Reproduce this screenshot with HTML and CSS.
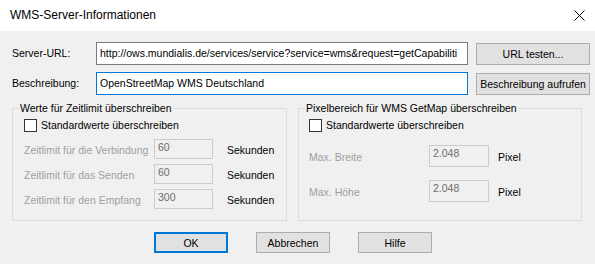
FILE: index.html
```html
<!DOCTYPE html>
<html lang="de">
<head>
  <meta charset="UTF-8" />
  <title>WMS-Server-Informationen</title>
  <link rel="stylesheet" href="styles.css">
</head>
<body>
  <div class="dialog">
    <div class="titlebar">
      <span class="title">WMS-Server-Informationen</span>
      <svg class="close" width="11" height="11" viewBox="0 0 11 11">
        <path d="M0.5 0.5 L10.5 10.5 M10.5 0.5 L0.5 10.5" stroke="#000" stroke-width="1" fill="none"/>
      </svg>
    </div>

    <div class="content">
      <div class="field-row">
        <span class="field-label">Server-URL:</span>
        <div class="textbox">http://ows.mundialis.de/services/service?service=wms&amp;request=getCapabiliti</div>
        <button class="btn btn-side">URL testen...</button>
      </div>
      <div class="field-row">
        <span class="field-label">Beschreibung:</span>
        <div class="textbox focused">OpenStreetMap WMS Deutschland</div>
        <button class="btn btn-side">Beschreibung aufrufen</button>
      </div>

      <div class="groups">
        <fieldset class="group group-time">
          <legend>Werte für Zeitlimit überschreiben</legend>
          <label class="check"><span class="box"></span>Standardwerte überschreiben</label>
          <div class="limit-grid">
            <span class="dim">Zeitlimit für die Verbindung</span>
            <span class="num">60</span>
            <span class="unit">Sekunden</span>

            <span class="dim">Zeitlimit für das Senden</span>
            <span class="num">60</span>
            <span class="unit">Sekunden</span>

            <span class="dim">Zeitlimit für den Empfang</span>
            <span class="num">300</span>
            <span class="unit">Sekunden</span>
          </div>
        </fieldset>

        <fieldset class="group group-pixel">
          <legend>Pixelbereich für WMS GetMap überschreiben</legend>
          <label class="check"><span class="box"></span>Standardwerte überschreiben</label>
          <div class="pixel-grid">
            <span class="dim">Max. Breite</span>
            <span class="num">2.048</span>
            <span class="unit">Pixel</span>

            <span class="dim">Max. Höhe</span>
            <span class="num">2.048</span>
            <span class="unit">Pixel</span>
          </div>
        </fieldset>
      </div>

      <div class="actions">
        <button class="btn btn-action default">OK</button>
        <button class="btn btn-action">Abbrechen</button>
        <button class="btn btn-action">Hilfe</button>
      </div>
    </div>
  </div>
</body>
</html>
```

FILE: styles.css
```css
* {
  box-sizing: border-box;
}

body {
  margin: 0;
  font-family: "Liberation Sans", Arial, sans-serif;
  font-size: 10.5px;
  color: #000;
  background: #f0f0f0;
}

.dialog {
  width: 595px;
  height: 264px;
  background: #f0f0f0;
  overflow: hidden;
}

.titlebar {
  height: 31px;
  background: #fff;
  display: flex;
  align-items: center;
  justify-content: space-between;
  padding: 0 10px 0 10px;
}

.title {
  font-size: 12px;
  padding-bottom: 1px;
}

.close {
  display: block;
  margin-bottom: 1px;
}

.content {
  padding: 11px 0 0 12px;
}

/* top rows */
.field-row {
  display: flex;
  align-items: flex-start;
  height: 23px;
  margin-bottom: 7px;
}

.field-label {
  width: 84px;
  line-height: 21px;
  padding-top: 1px;
}

.textbox {
  width: 372px;
  height: 23px;
  border: 1px solid #7a7a7a;
  background: #fff;
  padding: 0 3px;
  line-height: 21px;
  white-space: nowrap;
  overflow: hidden;
}

.textbox.focused {
  border-color: #0078d7;
}

.btn {
  font-family: inherit;
  font-size: 10.5px;
  color: #000;
  background: #e1e1e1;
  border: 1px solid #adadad;
  padding: 0;
  white-space: nowrap;
}

.btn-side {
  width: 114px;
  height: 22px;
  margin: 1px 0 0 8px;
}

/* group boxes */
.groups {
  display: flex;
  gap: 11px;
  margin-top: 2px;
}

.group {
  margin: 0;
  padding: 0 0 0 6px;
  border: 1px solid #dcdcdc;
  height: 119px;
  min-width: 0;
}

.group-time {
  width: 275px;
}

.group-pixel {
  width: 284px;
}

.group legend {
  padding: 0 1px;
  line-height: 13px;
}

.check {
  display: flex;
  align-items: center;
  margin: 4px 0 0 5px;
  line-height: 13px;
}

.group-pixel .check {
  margin-left: 4px;
}

.box {
  width: 13px;
  height: 13px;
  border: 1px solid #333;
  background: #fff;
  margin-right: 4px;
}

.dim {
  color: #a0a0a0;
  white-space: nowrap;
}

.num {
  border: 1px solid #cccccc;
  background: #f0f0f0;
  color: #6d6d6d;
  padding: 1px 3px 0;
  line-height: 13px;
}

.limit-grid {
  display: grid;
  grid-template-columns: 130px 59px auto;
  grid-auto-rows: 20px;
  row-gap: 5px;
  margin: 7px 0 0 5px;
}

.limit-grid .dim,
.limit-grid .unit {
  padding-top: 5px;
  line-height: 13px;
}

.limit-grid .unit {
  padding-left: 14px;
}

.pixel-grid {
  display: grid;
  grid-template-columns: 120px 60px auto;
  grid-auto-rows: 22px;
  row-gap: 13px;
  margin: 13px 0 0 4px;
}

.pixel-grid .dim,
.pixel-grid .unit {
  padding-top: 6px;
  line-height: 13px;
}

.pixel-grid .unit {
  padding-left: 9px;
}

/* bottom buttons */
.actions {
  display: flex;
  gap: 28px;
  margin: 11px 0 0 142px;
}

.btn-action {
  width: 74px;
  height: 21px;
}

.btn-action.default {
  border: 2px solid #0078d7;
}
```
